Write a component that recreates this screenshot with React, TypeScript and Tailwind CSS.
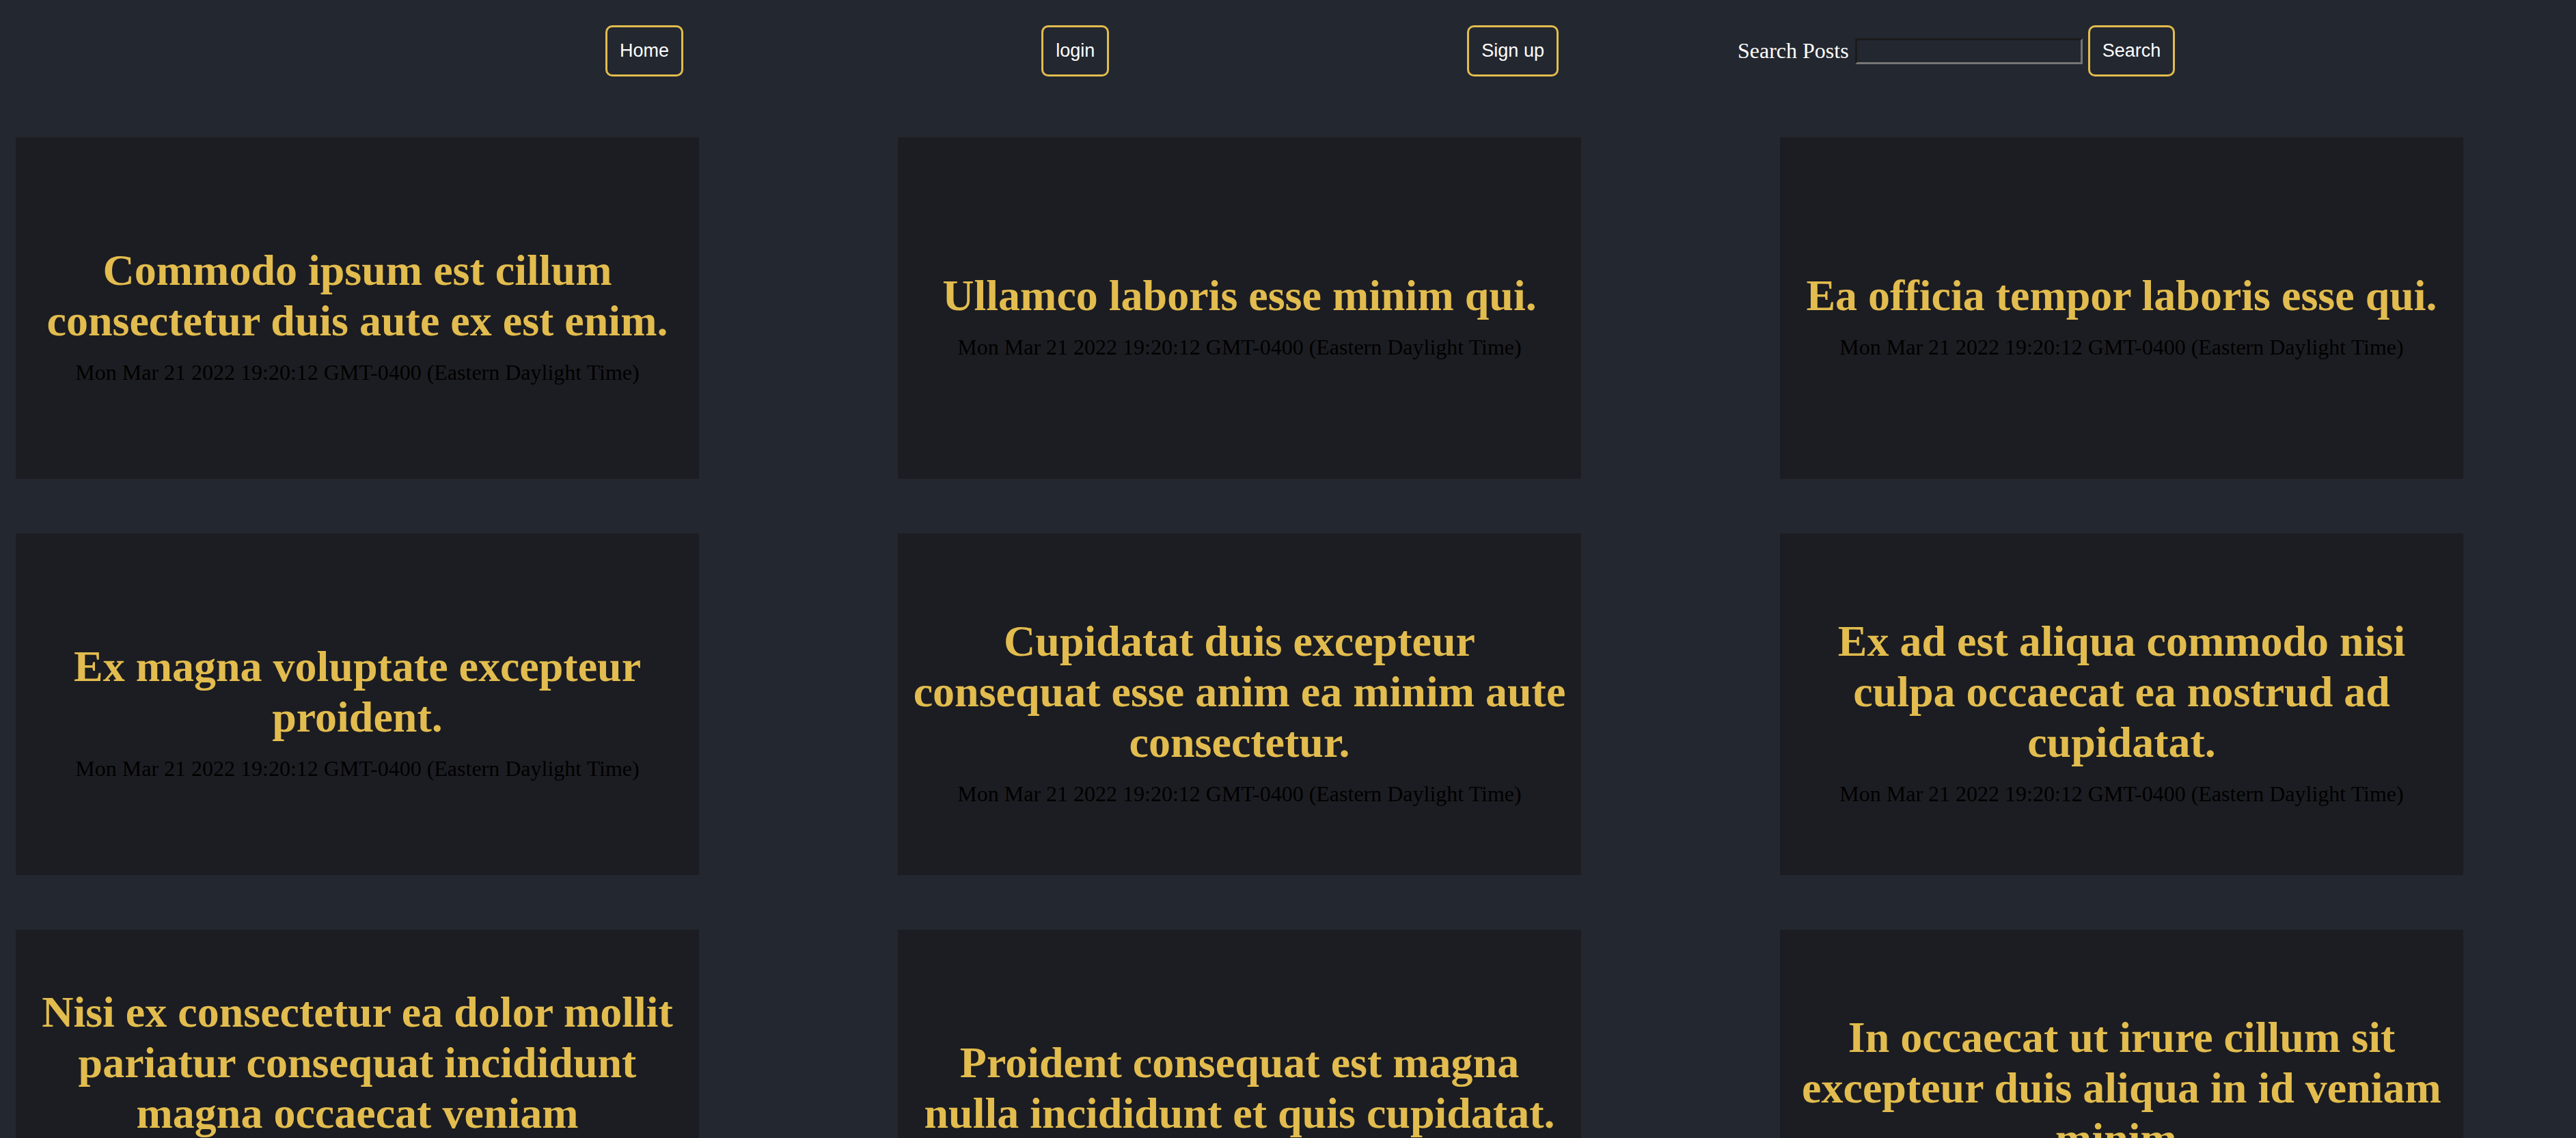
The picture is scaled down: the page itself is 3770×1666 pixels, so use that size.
import React from "react";

type Post = {
  title: string;
  date: string;
};

const DATE = "Mon Mar 21 2022 19:20:12 GMT-0400 (Eastern Daylight Time)";

const posts: Post[] = [
  { title: "Commodo ipsum est cillum consectetur duis aute ex est enim.", date: DATE },
  { title: "Ullamco laboris esse minim qui.", date: DATE },
  { title: "Ea officia tempor laboris esse qui.", date: DATE },
  { title: "Ex magna voluptate excepteur proident.", date: DATE },
  { title: "Cupidatat duis excepteur consequat esse anim ea minim aute consectetur.", date: DATE },
  { title: "Ex ad est aliqua commodo nisi culpa occaecat ea nostrud ad cupidatat.", date: DATE },
  {
    title:
      "Nisi ex consectetur ea dolor mollit pariatur consequat incididunt magna occaecat veniam exercitation.",
    date: DATE,
  },
  { title: "Proident consequat est magna nulla incididunt et quis cupidatat.", date: DATE },
  { title: "In occaecat ut irure cillum sit excepteur duis aliqua in id veniam minim.", date: DATE },
];

function NavButton({ children }: { children: React.ReactNode }) {
  return (
    <button
      type="button"
      className="h-[75px] rounded-[10px] border-[3px] border-[#e2bc4e] bg-transparent px-[18px] font-['Liberation_Sans',Arial,sans-serif] text-[27px] leading-none text-white"
    >
      {children}
    </button>
  );
}

function PostCard({ post }: { post: Post }) {
  return (
    <div className="flex h-[500px] flex-col items-center justify-center bg-[#1c1d22] px-[16px] pt-[20px] text-center">
      <h2 className="font-['Liberation_Serif','Times_New_Roman',serif] text-[64px] font-bold leading-[74px] text-[#e2bc4e]">
        {post.title}
      </h2>
      <p className="mt-[20px] font-['Liberation_Serif','Times_New_Roman',serif] text-[32px] leading-[37px] text-black">
        {post.date}
      </p>
    </div>
  );
}

export default function App() {
  return (
    <div className="h-screen overflow-hidden bg-[#23272f]">
      <header className="flex items-center pl-[624px] pt-[37px]">
        <nav className="flex w-[1919px] items-center justify-around">
          <NavButton>Home</NavButton>
          <NavButton>login</NavButton>
          <NavButton>Sign up</NavButton>
        </nav>
        <form
          className="flex items-center"
          onSubmit={(e) => e.preventDefault()}
        >
          <label
            htmlFor="search"
            className="font-['Liberation_Serif','Times_New_Roman',serif] text-[32px] leading-[37px] text-white"
          >
            Search Posts
          </label>
          <input
            id="search"
            type="text"
            className="ml-[9px] h-[38px] w-[333px] border-[3px] border-b-[#767676] border-l-[#1b1b1b] border-r-[#767676] border-t-[#1b1b1b] bg-transparent px-1 text-[27px] text-white outline-none"
          />
          <div className="ml-[8px]">
            <NavButton>Search</NavButton>
          </div>
        </form>
      </header>

      <main className="mt-[89px] grid grid-cols-[repeat(3,1000px)] gap-x-[291px] gap-y-[80px] pl-[23px]">
        {posts.map((post) => (
          <PostCard key={post.title} post={post} />
        ))}
      </main>
    </div>
  );
}
